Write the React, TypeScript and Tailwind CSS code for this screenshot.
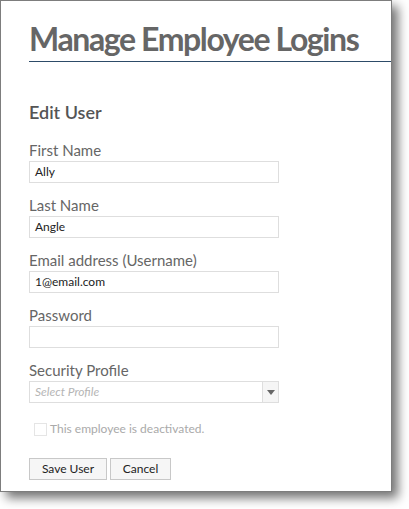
import React from "react";

const font = { fontFamily: 'Lato, "Open Sans", sans-serif' };

function Field({ label, value }: { label: string; value?: string }) {
  return (
    <div className="flex flex-col">
      <div className="text-[15px] leading-[20px] text-[#666] h-[21px]">{label}</div>
      <div className="w-[250px] h-[22px] border border-[#dedede] bg-white px-[5px] text-[12px] leading-[20px] text-[#222]">
        {value}
      </div>
    </div>
  );
}

export default function App() {
  return (
    <div className="w-[409px] h-[509px] bg-white" style={font}>
      <div className="w-[392px] h-[492px] border border-[#7d7d7d] bg-white shadow-[6px_6px_10px_rgba(0,0,0,0.55)] pl-[28px] pt-[18px]">
        <div className="text-[32px] leading-[40px] text-[#666] whitespace-nowrap font-bold tracking-[-1.4px]">
          Manage Employee Logins
        </div>
        <div className="h-px bg-[#2d4b68] mt-[2px]" />
        <div className="mt-[38px] text-[18px] leading-[24px] text-[#555] font-semibold">Edit User</div>
        <div className="mt-[16px] flex flex-col gap-[12px]">
          <Field label="First Name" value="Ally" />
          <Field label="Last Name" value="Angle" />
          <Field label="Email address (Username)" value="1@email.com" />
          <Field label="Password" />
          <div className="flex flex-col">
            <div className="text-[15px] leading-[20px] text-[#666] h-[21px]">Security Profile</div>
            <div className="w-[250px] h-[22px] border border-[#dedede] bg-white flex">
              <div className="flex-1 px-[5px] text-[12px] leading-[20px] italic text-[#b5b5b5]">Select Profile</div>
              <div className="w-[16px] border-l border-[#dedede] bg-[#f5f5f5] flex items-center justify-center">
                <svg width="8" height="5" viewBox="0 0 8 5"><path d="M0 0h8L4 5z" fill="#666" /></svg>
              </div>
            </div>
          </div>
        </div>
        <div className="mt-[18px] flex items-center ml-[5px]">
          <div className="w-[13px] h-[13px] border border-[#e5e5e5] bg-white" />
          <span className="ml-[3px] text-[12px] leading-[16px] text-[#aaa]">This employee is deactivated.</span>
        </div>
        <div className="mt-[21px] flex gap-[3px]">
          <button className="w-[78px] h-[22px] border border-[#c8c8c8] bg-[#f6f6f6] text-[12px] text-[#222]">Save User</button>
          <button className="w-[61px] h-[22px] border border-[#c8c8c8] bg-[#f6f6f6] text-[12px] text-[#222]">Cancel</button>
        </div>
      </div>
    </div>
  );
}
